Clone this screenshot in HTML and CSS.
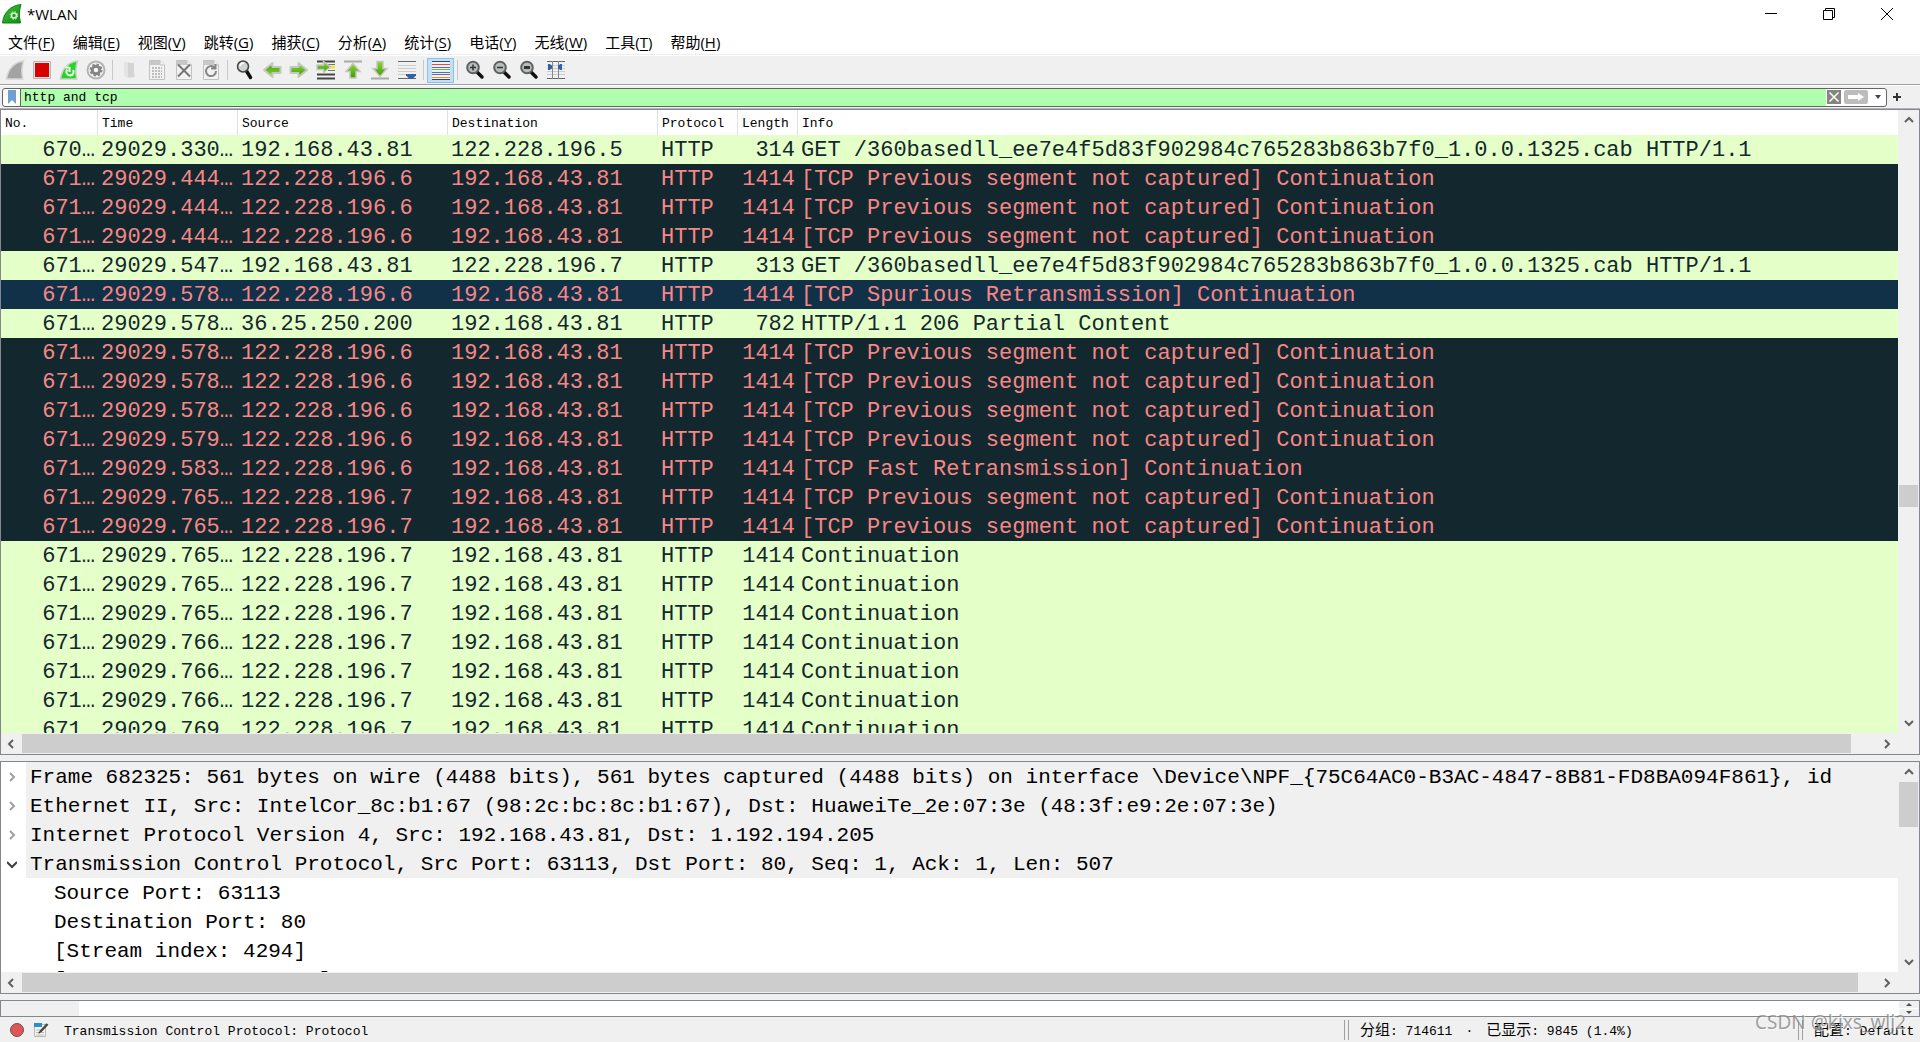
FILE: index.html
```html
<!DOCTYPE html>
<html lang="zh-CN">
<head>
<meta charset="utf-8">
<title>*WLAN</title>
<link rel="stylesheet" href="styles.css">
</head>
<body>
<svg class="defs" aria-hidden="true">
  <defs>
    <linearGradient id="green" x1="0" y1="0" x2="0" y2="1"><stop offset="0" stop-color="#8fd63a"/><stop offset="1" stop-color="#3f9a08"/></linearGradient>
    <linearGradient id="fin" x1="0" y1="0" x2="1" y2="1"><stop offset="0" stop-color="#3fc43a"/><stop offset="1" stop-color="#0f8a12"/></linearGradient>
    <symbol id="page" viewBox="0 0 20 20"><path d="M2.500 .5h10.500l4.500 4.500v14.500h-15z" fill="#f2f2f2" stroke="#c2c2c2"/><path d="M2.500 1h10.500l4 4H2.500z" fill="#c8c8c8"/><path d="M13 .5v4.500h4.500" fill="#f6f6f6" stroke="#c2c2c2"/></symbol>
    <symbol id="lens" viewBox="0 0 20 20"><path d="M11.500 11.500l5.500 5.500" stroke="#111" stroke-width="3.500" stroke-linecap="round"/><circle cx="8" cy="7.500" r="5.800" fill="#b9bcbc" stroke="#5d6060" stroke-width="2"/></symbol>
    <symbol id="arrow" viewBox="0 0 20 20"><path d="M1.500 7h8V3l8.500 7-8.500 7v-4h-8z" fill="url(#green)" stroke="#c4c9bf" stroke-width="2" stroke-linejoin="round"/></symbol>
  </defs>
</svg>

<header class="titlebar">
  <svg class="logo" viewBox="0 0 20 20"><path d="M.5 19C1.500 9 8 1.500 19 .5c-2 6-2 12-.5 18.500z" fill="url(#fin)" stroke="#187a18"/><circle cx="12" cy="11.500" r="2.500" fill="none" stroke="#d9f5d9" stroke-width="1.500"/><circle cx="12" cy="11.500" r="3.800" fill="none" stroke="#d9f5d9" stroke-width="1" stroke-dasharray="1.500 1.500"/></svg>
  <h1>*WLAN</h1>
  <div class="window-buttons">
    <button aria-label="最小化"><svg viewBox="0 0 12 12"><path d="M0 5.500h12"/></svg></button>
    <button aria-label="还原"><svg viewBox="0 0 12 12"><path d="M.5 2.500h9v9h-9zM2.500 2.500v-2h9v9h-2"/></svg></button>
    <button aria-label="关闭"><svg viewBox="0 0 12 12"><path d="M0 0l12 12M12 0L0 12"/></svg></button>
  </div>
</header>

<nav class="menubar">
  <button>文件(<u>F</u>)</button>
  <button>编辑(<u>E</u>)</button>
  <button>视图(<u>V</u>)</button>
  <button>跳转(<u>G</u>)</button>
  <button>捕获(<u>C</u>)</button>
  <button>分析(<u>A</u>)</button>
  <button>统计(<u>S</u>)</button>
  <button>电话(<u>Y</u>)</button>
  <button>无线(<u>W</u>)</button>
  <button>工具(<u>T</u>)</button>
  <button>帮助(<u>H</u>)</button>
</nav>

<div class="toolbar" role="toolbar">
  <button aria-label="开始捕获"><svg viewBox="0 0 20 20"><path d="M1.500 19C3 9.500 8.500 2.500 18.500 1c-2 6-2 12-.8 18z" fill="#a3a3a3" stroke="#d6d6d6" stroke-width="1.500"/></svg></button>
  <button aria-label="停止捕获"><svg viewBox="0 0 20 20"><path d="M1.500 1.500h17v17h-17z" fill="#e4e4e4" stroke="#b4b4b4"/><path d="M3 3h14v14H3z" fill="#d90000"/></svg></button>
  <button aria-label="重新开始捕获"><svg viewBox="0 0 20 20"><path d="M1.500 19C3 9.500 8.500 2.500 18.500 1c-2 6-2 12-.8 18z" fill="#20d820" stroke="#c9cfc9" stroke-width="1.500"/><path d="M8 9.500c-1.500 3 0 6 3 6s4.500-3.500 3-5.500M10.500 7v5M10.500 7.500H6.500" fill="none" stroke="#fff" stroke-width="2"/></svg></button>
  <button aria-label="捕获选项"><svg viewBox="0 0 20 20"><circle cx="10" cy="10" r="8.500" fill="#f4f4f4" stroke="#b3b3b3" stroke-width="2"/><circle cx="10" cy="10" r="5.500" fill="none" stroke="#858585" stroke-width="2" stroke-dasharray="2.300 2"/><circle cx="10" cy="10" r="3.800" fill="none" stroke="#858585" stroke-width="3"/></svg></button>
  <span class="separator"></span>
  <button aria-label="打开"><svg viewBox="0 0 20 20"><path d="M4 2h6l2 2v14H8l-4-2z" fill="#e4e4e4"/><path d="M8 3h6v11l1 3H8z" fill="#d4d4d4"/></svg></button>
  <button aria-label="保存"><svg viewBox="0 0 20 20"><use href="#page"/><path d="M5 8h10M5 11h10M5 14h10M5 17h10" stroke="#bdbdbd" stroke-width="2" stroke-dasharray="2 1"/></svg></button>
  <button aria-label="关闭文件"><svg viewBox="0 0 20 20"><use href="#page"/><path d="M4 4.500l12 12M16 4.500l-12 12" stroke="#757575" stroke-width="2"/></svg></button>
  <button aria-label="重新加载"><svg viewBox="0 0 20 20"><use href="#page"/><path d="M13.500 7.500A5 5 0 1 0 15 11M14.500 4v4.500H10" fill="none" stroke="#858585" stroke-width="2"/></svg></button>
  <span class="separator"></span>
  <button aria-label="查找"><svg viewBox="0 0 20 20"><path d="M11.500 11l4 6.500" stroke="#111" stroke-width="3.500" stroke-linecap="round"/><circle cx="8" cy="6.500" r="5.500" fill="#cfd3d3" stroke="#444" stroke-width="1.500"/><path d="M5 6c.5-2 2-3 4-2.500" fill="none" stroke="#fff" stroke-width="1.500"/></svg></button>
  <button aria-label="上一分组"><svg viewBox="0 0 20 20"><use href="#arrow" transform="rotate(180 10 10)"/></svg></button>
  <button aria-label="下一分组"><svg viewBox="0 0 20 20"><use href="#arrow"/></svg></button>
  <button aria-label="转到分组"><svg viewBox="0 0 20 20"><path d="M1 1.500h18M1 14.500h18M1 18.500h18" stroke="#444" stroke-width="2"/><path d="M12 4.500h7M12 10.500h7" stroke="#777"/><path d="M13 7h6" stroke="#f4e23c" stroke-width="3"/><path d="M1 5h6.500V1.500l7 5.500-7 5.500V9.500H1z" fill="url(#green)" stroke="#c4c9bf" stroke-width="1.500"/></svg></button>
  <button aria-label="首个分组"><svg viewBox="0 0 20 20"><path d="M1 1.500h18" stroke="#aaa" stroke-width="2"/><path d="M10 3.500l7 8h-4V18H7v-6.500H3z" fill="url(#green)" stroke="#c4c9bf" stroke-width="1.500"/></svg></button>
  <button aria-label="最新分组"><svg viewBox="0 0 20 20"><path d="M1 18.500h18" stroke="#aaa" stroke-width="2"/><path d="M10 16.500l7-8h-4V1.500H7v7H3z" fill="url(#green)" stroke="#c4c9bf" stroke-width="1.500"/></svg></button>
  <button aria-label="自动滚动"><svg viewBox="0 0 20 20"><path d="M1 1.500h18M1 18.500h18" stroke="#666"/><path d="M1 5.500h18M1 8.500h18M1 11.500h18M1 14.500h18" stroke="#ccc"/><path d="M9 14h10v1.500L16 18.500h-4L9 15.500z" fill="#2f62a8"/></svg></button>
  <span class="separator"></span>
  <button class="active" aria-label="着色" aria-pressed="true"><svg viewBox="0 0 20 20"><path d="M1 1h18v19H1z" fill="#e9f0f6"/><path d="M1 1.500h18" stroke="#444"/><path d="M1 4.500h18" stroke="#ee4444"/><path d="M1 7.500h18" stroke="#4674b8"/><path d="M1 9.500h18" stroke="#69b536"/><path d="M1 12.500h18" stroke="#4674b8"/><path d="M1 14.500h18" stroke="#8a5aa0"/><path d="M1 17.500h18" stroke="#c8a022"/><path d="M1 19.500h18" stroke="#444"/></svg></button>
  <span class="separator"></span>
  <button aria-label="放大"><svg viewBox="0 0 20 20"><use href="#lens"/><path d="M5 7.500h6M8 4.500v6" stroke="#333" stroke-width="1.500"/></svg></button>
  <button aria-label="缩小"><svg viewBox="0 0 20 20"><use href="#lens"/><path d="M5 7.500h6" stroke="#333" stroke-width="1.500"/></svg></button>
  <button aria-label="原始大小"><svg viewBox="0 0 20 20"><use href="#lens"/><path d="M5 7.500h6" stroke="#333" stroke-width="3"/></svg></button>
  <button aria-label="调整列宽"><svg viewBox="0 0 20 20"><path d="M1 1.500h18M1 18.500h18" stroke="#666"/><path d="M1 5.500h18M1 8.500h18M1 11.500h18M1 14.500h18" stroke="#ccc"/><path d="M6.500 1v18M12.500 1v18" stroke="#888"/><path d="M2 4h1.500L6 5.500v3L3.500 10H2zM16 4h-1.500L12 5.500v3l2.500 1.500H16z" fill="#2f62a8"/></svg></button>
</div>

<form class="filterbar">
  <div class="filter">
    <button type="button" class="bookmark" aria-label="书签"><svg viewBox="0 0 10 14"><path d="M1 0h8v14l-4-4-4 4z" fill="#729fcf"/></svg></button>
    <input type="text" aria-label="显示过滤器" value="http and tcp" spellcheck="false">
    <button type="button" class="clear" aria-label="清除"><svg viewBox="0 0 14 14"><path d="M2.500 2.500l9 9M11.500 2.500l-9 9" stroke="#fff" stroke-width="1.500"/></svg></button>
    <button type="submit" class="apply" aria-label="应用"><svg viewBox="0 0 24 14"><path d="M4 5h10V3l6 4-6 4V9H4z" fill="#fff"/></svg></button>
    <button type="button" class="history" aria-label="历史"><svg viewBox="0 0 6 4"><path d="M0 0h6L3 4z" fill="#444"/></svg></button>
  </div>
  <button type="button" class="add" aria-label="添加"><svg viewBox="0 0 8 8"><path d="M4 0v8M0 4h8" stroke="#333" stroke-width="2"/></svg></button>
</form>

<main class="panes">
  <section class="pane">
    <div class="viewport">
      <table class="packets">
        <colgroup><col class="c-no"><col class="c-time"><col class="c-address"><col class="c-address"><col class="c-protocol"><col class="c-length"><col></colgroup>
        <thead><tr><th>No.</th><th>Time</th><th>Source</th><th>Destination</th><th>Protocol</th><th>Length</th><th>Info</th></tr></thead>
        <tbody>
          <tr><td>670…</td><td>29029.330…</td><td>192.168.43.81</td><td>122.228.196.5</td><td>HTTP</td><td>314</td><td>GET /360basedll_ee7e4f5d83f902984c765283b863b7f0_1.0.0.1325.cab HTTP/1.1</td></tr>
          <tr class="bad"><td>671…</td><td>29029.444…</td><td>122.228.196.6</td><td>192.168.43.81</td><td>HTTP</td><td>1414</td><td>[TCP Previous segment not captured] Continuation</td></tr>
          <tr class="bad"><td>671…</td><td>29029.444…</td><td>122.228.196.6</td><td>192.168.43.81</td><td>HTTP</td><td>1414</td><td>[TCP Previous segment not captured] Continuation</td></tr>
          <tr class="bad"><td>671…</td><td>29029.444…</td><td>122.228.196.6</td><td>192.168.43.81</td><td>HTTP</td><td>1414</td><td>[TCP Previous segment not captured] Continuation</td></tr>
          <tr><td>671…</td><td>29029.547…</td><td>192.168.43.81</td><td>122.228.196.7</td><td>HTTP</td><td>313</td><td>GET /360basedll_ee7e4f5d83f902984c765283b863b7f0_1.0.0.1325.cab HTTP/1.1</td></tr>
          <tr class="bad hover"><td>671…</td><td>29029.578…</td><td>122.228.196.6</td><td>192.168.43.81</td><td>HTTP</td><td>1414</td><td>[TCP Spurious Retransmission] Continuation</td></tr>
          <tr><td>671…</td><td>29029.578…</td><td>36.25.250.200</td><td>192.168.43.81</td><td>HTTP</td><td>782</td><td>HTTP/1.1 206 Partial Content</td></tr>
          <tr class="bad"><td>671…</td><td>29029.578…</td><td>122.228.196.6</td><td>192.168.43.81</td><td>HTTP</td><td>1414</td><td>[TCP Previous segment not captured] Continuation</td></tr>
          <tr class="bad"><td>671…</td><td>29029.578…</td><td>122.228.196.6</td><td>192.168.43.81</td><td>HTTP</td><td>1414</td><td>[TCP Previous segment not captured] Continuation</td></tr>
          <tr class="bad"><td>671…</td><td>29029.578…</td><td>122.228.196.6</td><td>192.168.43.81</td><td>HTTP</td><td>1414</td><td>[TCP Previous segment not captured] Continuation</td></tr>
          <tr class="bad"><td>671…</td><td>29029.579…</td><td>122.228.196.6</td><td>192.168.43.81</td><td>HTTP</td><td>1414</td><td>[TCP Previous segment not captured] Continuation</td></tr>
          <tr class="bad"><td>671…</td><td>29029.583…</td><td>122.228.196.6</td><td>192.168.43.81</td><td>HTTP</td><td>1414</td><td>[TCP Fast Retransmission] Continuation</td></tr>
          <tr class="bad"><td>671…</td><td>29029.765…</td><td>122.228.196.7</td><td>192.168.43.81</td><td>HTTP</td><td>1414</td><td>[TCP Previous segment not captured] Continuation</td></tr>
          <tr class="bad"><td>671…</td><td>29029.765…</td><td>122.228.196.7</td><td>192.168.43.81</td><td>HTTP</td><td>1414</td><td>[TCP Previous segment not captured] Continuation</td></tr>
          <tr><td>671…</td><td>29029.765…</td><td>122.228.196.7</td><td>192.168.43.81</td><td>HTTP</td><td>1414</td><td>Continuation</td></tr>
          <tr><td>671…</td><td>29029.765…</td><td>122.228.196.7</td><td>192.168.43.81</td><td>HTTP</td><td>1414</td><td>Continuation</td></tr>
          <tr><td>671…</td><td>29029.765…</td><td>122.228.196.7</td><td>192.168.43.81</td><td>HTTP</td><td>1414</td><td>Continuation</td></tr>
          <tr><td>671…</td><td>29029.766…</td><td>122.228.196.7</td><td>192.168.43.81</td><td>HTTP</td><td>1414</td><td>Continuation</td></tr>
          <tr><td>671…</td><td>29029.766…</td><td>122.228.196.7</td><td>192.168.43.81</td><td>HTTP</td><td>1414</td><td>Continuation</td></tr>
          <tr><td>671…</td><td>29029.766…</td><td>122.228.196.7</td><td>192.168.43.81</td><td>HTTP</td><td>1414</td><td>Continuation</td></tr>
          <tr><td>671…</td><td>29029.769…</td><td>122.228.196.7</td><td>192.168.43.81</td><td>HTTP</td><td>1414</td><td>Continuation</td></tr>
        </tbody>
      </table>
    </div>
    <div class="scroll vertical">
      <button aria-label="向上"><svg viewBox="0 0 10 10"><path d="M1 7l4-4 4 4"/></svg></button>
      <div class="track list-v"><div class="thumb"></div></div>
      <button aria-label="向下"><svg viewBox="0 0 10 10"><path d="M1 3l4 4 4-4"/></svg></button>
    </div>
    <div class="scroll horizontal">
      <button aria-label="向左"><svg viewBox="0 0 10 10"><path d="M7 1L3 5l4 4"/></svg></button>
      <div class="track list-h"><div class="thumb"></div></div>
      <button aria-label="向右"><svg viewBox="0 0 10 10"><path d="M3 1l4 4-4 4"/></svg></button>
    </div>
  </section>

  <section class="pane">
    <div class="viewport">
      <ul class="details">
        <li><button aria-label="展开"><svg viewBox="0 0 10 10"><path d="M3 1l4 4-4 4"/></svg></button><span>Frame 682325: 561 bytes on wire (4488 bits), 561 bytes captured (4488 bits) on interface \Device\NPF_{75C64AC0-B3AC-4847-8B81-FD8BA094F861}, id</span></li>
        <li><button aria-label="展开"><svg viewBox="0 0 10 10"><path d="M3 1l4 4-4 4"/></svg></button><span>Ethernet II, Src: IntelCor_8c:b1:67 (98:2c:bc:8c:b1:67), Dst: HuaweiTe_2e:07:3e (48:3f:e9:2e:07:3e)</span></li>
        <li><button aria-label="展开"><svg viewBox="0 0 10 10"><path d="M3 1l4 4-4 4"/></svg></button><span>Internet Protocol Version 4, Src: 192.168.43.81, Dst: 1.192.194.205</span></li>
        <li class="open"><button aria-label="折叠"><svg viewBox="0 0 10 10"><path d="M0 3l5 5 5-5"/></svg></button><span>Transmission Control Protocol, Src Port: 63113, Dst Port: 80, Seq: 1, Ack: 1, Len: 507</span></li>
        <li class="child">Source Port: 63113</li>
        <li class="child">Destination Port: 80</li>
        <li class="child">[Stream index: 4294]</li>
        <li class="child">[TCP Segment Len: 507]</li>
      </ul>
    </div>
    <div class="scroll vertical">
      <button aria-label="向上"><svg viewBox="0 0 10 10"><path d="M1 7l4-4 4 4"/></svg></button>
      <div class="track detail-v"><div class="thumb"></div></div>
      <button aria-label="向下"><svg viewBox="0 0 10 10"><path d="M1 3l4 4 4-4"/></svg></button>
    </div>
    <div class="scroll horizontal">
      <button aria-label="向左"><svg viewBox="0 0 10 10"><path d="M7 1L3 5l4 4"/></svg></button>
      <div class="track detail-h"><div class="thumb"></div></div>
      <button aria-label="向右"><svg viewBox="0 0 10 10"><path d="M3 1l4 4-4 4"/></svg></button>
    </div>
  </section>

  <section class="bytes">
    <div class="offsets"></div>
    <div class="stepper">
      <button aria-label="向上"><svg viewBox="0 0 6 3"><path d="M0 3l3-3 3 3z"/></svg></button>
      <button aria-label="向下"><svg viewBox="0 0 6 3"><path d="M0 0l3 3 3-3z"/></svg></button>
    </div>
  </section>
</main>

<footer class="statusbar">
  <button aria-label="专家信息"><svg viewBox="0 0 16 16"><circle cx="8" cy="8" r="6.500" fill="#e05555" stroke="#6f5050"/></svg></button>
  <button aria-label="捕获文件属性"><svg viewBox="0 0 16 16"><path d="M1.500 2.500h11v12h-11z" fill="#f7f7f0" stroke="#b8b8b0"/><path d="M1 1h8v4H1z" fill="#2c8fd0"/><path d="M3 8h5M3 10.500h8M3 13h8" stroke="#bbb"/><path d="M7 10l7.500-8" stroke="#444" stroke-width="2.500"/><path d="M5.500 11.500l2-.5-1.500-1.500z" fill="#222"/></svg></button>
  <p class="field">Transmission Control Protocol: Protocol</p>
  <p class="counts"><b>分组</b>: 714611<i>·</i><b>已显示</b>: 9845 (1.4%)</p>
  <p class="profile"><b>配置</b>: Default</p>
  <span class="watermark">CSDN @kjxs_wlj2</span>
</footer>
</body>
</html>
```
FILE: styles.css
```css
* { box-sizing: border-box; }

body {
  margin: 0;
  height: 100vh;
  display: flex;
  flex-direction: column;
  overflow: hidden;
  background: #f0f0f0;
  color: #000;
  font: 13px/16px "Liberation Mono", "Noto Sans CJK SC", monospace;
}

button {
  display: flex;
  flex: none;
  align-items: center;
  justify-content: center;
  padding: 0;
  border: 0;
  background: none;
  color: inherit;
  font: inherit;
}

h1, p, ul { margin: 0; padding: 0; }

.defs { display: block; width: 0; height: 0; position: absolute; }

/* Title bar */
.titlebar {
  display: flex;
  align-items: center;
  height: 28px;
  padding-left: 2px;
  background: #fff;
}
.logo { width: 20px; height: 20px; }
.titlebar h1 {
  margin-left: 5px;
  font: 15px/20px "Open Sans", sans-serif;
}
.window-buttons {
  display: flex;
  margin-left: auto;
  padding-right: 4px;
}
.window-buttons button { width: 58px; height: 28px; }
.window-buttons svg {
  width: 12px;
  height: 12px;
  fill: none;
  stroke: #000;
}

/* Menus */
.menubar {
  display: flex;
  gap: 2px;
  height: 28px;
  border-bottom: 1px solid #fff;
  background: linear-gradient(#eee, #eee) 0 100% / 100% 1px no-repeat #fff;
}
.menubar button {
  padding: 0 8px;
  font: 15px/22px "Open Sans", "Noto Sans CJK SC", sans-serif;
}
.menubar u { text-underline-offset: 2px; }

/* Toolbar */
.toolbar {
  display: flex;
  align-items: center;
  height: 29px;
  padding: 0 1px;
  border-bottom: 1px solid #a0a0a0;
}
.toolbar button { width: 27px; height: 25px; }
.toolbar svg { width: 20px; height: 20px; }
.toolbar .active {
  border: 1px solid #84c3f5;
  background: #c4def4;
}
.separator {
  width: 7px;
  height: 20px;
  background: linear-gradient(#c8c8c8, #c8c8c8) 50% 0 / 1px 100% no-repeat;
}

/* Display filter */
.filterbar {
  display: flex;
  align-items: center;
  height: 24px;
  padding: 0 2px;
  border-top: 1px solid #fff;
  border-bottom: 1px solid #b4b4b8;
}
.filter {
  display: flex;
  flex: 1;
  align-items: center;
  height: 19px;
  border: 1px solid #646464;
  border-radius: 3px;
  background: #fff;
}
.filter .bookmark {
  width: 18px;
  height: 17px;
  border-right: 1px solid #646464;
}
.bookmark svg { width: 10px; height: 14px; }
.filter input {
  flex: 1;
  min-width: 0;
  height: 17px;
  padding: 0 3px;
  border: 0;
  outline: 0;
  background: #afffaf;
  color: #000;
  font: 13px/17px "Liberation Mono", monospace;
}
.filter .clear {
  width: 14px;
  height: 14px;
  margin: 0 3px 0 1px;
  background: #84877f;
}
.clear svg { width: 14px; height: 14px; }
.filter .apply {
  width: 24px;
  height: 14px;
  border-radius: 2px;
  background: #bdbdbd;
}
.apply svg { width: 24px; height: 14px; }
.filter .history { width: 16px; margin-left: 2px; }
.history svg { width: 6px; height: 4px; }
.add { width: 20px; margin-right: 11px; }
.add svg { width: 8px; height: 8px; }

/* Panes */
.panes {
  flex: 1;
  min-height: 0;
  display: grid;
  grid-template-rows: minmax(0, 646fr) minmax(0, 233fr) 17px;
  gap: 6px;
}
.pane {
  display: grid;
  grid-template: minmax(0, 1fr) 20px / minmax(0, 1fr) 20px;
  gap: 1px;
  border: 1px solid #828790;
  background: #f0f0f0;
}
.viewport {
  overflow: hidden;
  background: #fff;
}

.packets {
  width: 100%;
  table-layout: fixed;
  border-collapse: collapse;
  white-space: nowrap;
  color: #12272e;
}
.c-no { width: 97px; }
.c-time { width: 140px; }
.c-address { width: 210px; }
.c-protocol { width: 80px; }
.c-length { width: 60px; }
.packets th {
  height: 25px;
  padding: 2px 4px 0 4px;
  background: linear-gradient(#e0e0e0, #e0e0e0) 100% 0 / 1px 100% no-repeat #fff;
  color: #000;
  font-weight: 400;
  text-align: left;
}
.packets th:last-child { background: #fff; }
.packets td {
  height: 29px;
  padding: 2px 3px 0;
  overflow: hidden;
  background: #e4ffc7;
  font-size: 22px;
  line-height: 27px;
}
.packets td:first-child,
.packets td:nth-child(6) { text-align: right; }
.packets .bad td { background: #12272e; color: #f78787; }
.packets .hover td { background: #113148; }

.details {
  list-style: none;
  font-size: 21px;
  line-height: 31px;
  white-space: nowrap;
}
.details li { display: flex; height: 29px; }
.details button { width: 25px; height: 29px; padding-right: 3px; }
.details svg {
  width: 10px;
  height: 10px;
  fill: none;
  stroke: #a0a0a0;
  stroke-width: 2;
}
.details .open svg { stroke: #404040; }
.details span {
  flex: 1;
  padding-left: 4px;
  background: #f0f0f0;
}
.details .child { padding-left: 53px; }

/* Scroll bars */
.scroll { display: flex; }
.scroll.vertical { flex-direction: column; }
.scroll button { width: 19px; height: 20px; }
.scroll svg {
  width: 10px;
  height: 10px;
  fill: none;
  stroke: #606060;
  stroke-width: 2;
}
.scroll.horizontal button { width: 21px; padding-right: 2px; }
.scroll.vertical .thumb { width: 19px; }
.scroll.horizontal .thumb { height: 19px; }
.track { flex: 1; display: flex; }
.vertical .track { flex-direction: column; }
.thumb { background: #cdcdcd; }
.list-v { padding-top: 355px; }
.list-v .thumb { height: 22px; }
.list-h .thumb { width: 98.6%; }
.detail-v .thumb { height: 45px; }
.detail-h .thumb { width: 99%; }

/* Packet bytes */
.bytes {
  display: flex;
  justify-content: space-between;
  border: 1px solid #828790;
  background: #fff;
}
.offsets { width: 78px; background: #f0f0f0; }
.stepper {
  display: grid;
  grid-template-rows: 1fr 1fr;
  gap: 1px;
  width: 20px;
  overflow: hidden;
}
.stepper button { background: #f0f0f0; }
.stepper svg { width: 6px; height: 3px; fill: #505050; }

/* Status bar */
.statusbar {
  position: relative;
  display: flex;
  align-items: center;
  height: 25px;
  padding-left: 5px;
}
.statusbar button { width: 24px; height: 24px; }
.statusbar svg { width: 16px; height: 16px; }
.statusbar b { font-weight: 400; font-size: 15px; }
.statusbar i { margin: 0 13px; font-style: normal; }
.statusbar p { height: 20px; line-height: 24px; white-space: nowrap; }
.field { flex: 1; padding-left: 11px; }
.statusbar .counts, .statusbar .profile {
  padding-left: 15px;
  border-left: 1px solid #a0a0a0;
  background: linear-gradient(#a0a0a0, #a0a0a0) 3px 0 / 1px 100% no-repeat;
}
.counts { width: 454px; }
.profile { width: 122px; }
.watermark {
  position: absolute;
  right: 14px;
  bottom: 7px;
  color: rgba(120, 120, 120, .7);
  text-shadow: 1px 1px 0 rgba(255, 255, 255, .6);
  font: 19px/26px "Noto Sans", sans-serif;
}
```
